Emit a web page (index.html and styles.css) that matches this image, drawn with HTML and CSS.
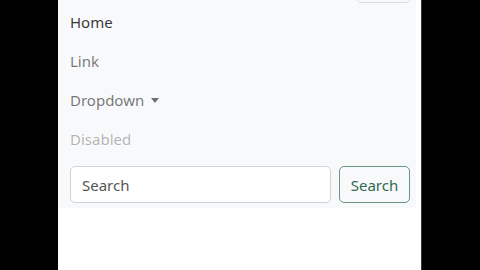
FILE: index.html
```html
<!DOCTYPE html>
<html lang="en">
<head>
    <meta charset="UTF-8">
    <title>Navbar</title>
    <link rel="stylesheet" href="styles.css">
</head>
<body>
    <div class="page">
        <nav class="navbar">
            <div class="top-row">
                <button class="toggler" aria-label="Toggle navigation"></button>
            </div>
            <ul class="nav-list">
                <li><a class="nav-link active" href="#">Home</a></li>
                <li><a class="nav-link" href="#">Link</a></li>
                <li><a class="nav-link dropdown" href="#">Dropdown</a></li>
                <li><a class="nav-link disabled">Disabled</a></li>
            </ul>
            <form class="search-form">
                <input class="search-input" type="search" placeholder="Search">
                <button class="search-btn" type="button">Search</button>
            </form>
        </nav>
    </div>
</body>
</html>
```
FILE: styles.css
```css
body {
    margin: 0;
    background-color: #000;
    font-family: "Noto Sans", "Open Sans", sans-serif;
}

.page {
    margin-left: 58px;
    width: 363px;
    height: 270px;
    background-color: #fff;
    border-right: 1px solid #3a3a3a;
    overflow: hidden;
}

.navbar {
    width: 340px;
    padding: 0 6px 5px 12px;
    background-color: #f8f9fa;
}

.top-row {
    height: 3px;
    display: flex;
    justify-content: flex-end;
    overflow: hidden;
}

.toggler {
    width: 55px;
    height: 38px;
    margin-top: -35px;
    margin-right: -1px;
    background: transparent;
    border: 1px solid #dcdcdc;
    border-radius: 5px;
}

.nav-list {
    list-style: none;
    margin: 0;
    padding: 0;
}

.nav-link {
    display: inline-block;
    padding: 8px 0;
    font-size: 15px;
    line-height: 23px;
    color: rgba(0, 0, 0, 0.55);
    text-decoration: none;
}

.nav-link.active {
    color: rgba(0, 0, 0, 0.8);
}

.nav-link.disabled {
    color: rgba(0, 0, 0, 0.3);
}

.dropdown::after {
    content: "";
    display: inline-block;
    margin-left: 7px;
    vertical-align: 3px;
    border-top: 5px solid;
    border-left: 4.5px solid transparent;
    border-right: 4.5px solid transparent;
}

.search-form {
    display: flex;
    gap: 8px;
    margin-top: 7px;
}

.search-input {
    width: 261px;
    height: 37px;
    box-sizing: border-box;
    padding: 0 11px;
    font-family: inherit;
    font-size: 15px;
    color: #212529;
    background-color: #fff;
    border: 1px solid #ced4da;
    border-radius: 5px;
}

.search-input::placeholder {
    color: #555;
}

.search-btn {
    width: 71px;
    height: 37px;
    padding: 0;
    font-family: inherit;
    font-size: 15px;
    color: #2f6b52;
    background: transparent;
    border: 1px solid #6a9783;
    border-radius: 5px;
}
```
